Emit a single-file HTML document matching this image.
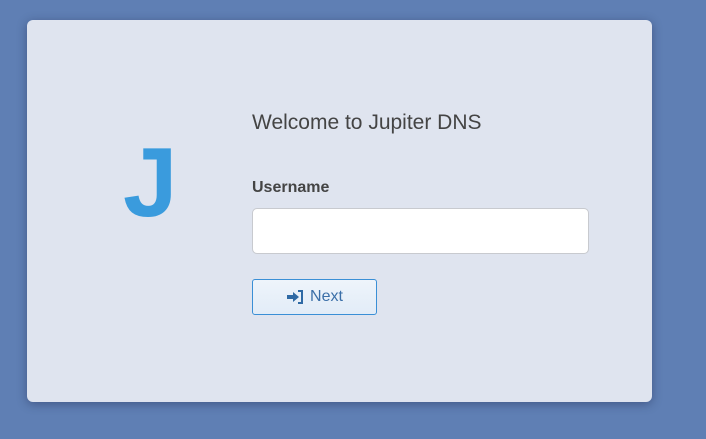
<!DOCTYPE html>
<html><head><style>
html,body{margin:0;padding:0;width:706px;height:439px;background:#5f7fb4;overflow:hidden;font-family:"Liberation Sans",sans-serif;}
.card{position:absolute;left:27px;top:20px;width:625px;height:382px;background:#dfe4ef;border-radius:6px;box-shadow:0 2px 10px rgba(30,40,80,0.45);}
.j{position:absolute;left:123px;top:133px;font-size:98px;font-weight:bold;color:#3a9bdd;line-height:1;}
.t{position:absolute;left:252px;top:111px;font-size:21px;color:#444;}
.l{position:absolute;left:252px;top:179px;font-size:16px;font-weight:bold;color:#444;}
.in{position:absolute;left:252px;top:208px;width:335px;height:44px;background:#fff;border:1px solid #c8cacf;border-radius:5px;}
.b{position:absolute;left:252px;top:279px;width:123px;height:34px;border:1px solid #3a8fd6;border-radius:3px;background:linear-gradient(#eef4fb,#e2ecf7);color:#3b6fa8;font-size:16px;display:flex;align-items:center;justify-content:center;gap:6px;}
</style></head><body>
<div class="card"></div>
<div class="j">J</div>
<div class="t">Welcome to Jupiter DNS</div>
<div class="l">Username</div>
<div class="in"></div>
<div class="b"><svg width="18" height="14" viewBox="0 0 18 14"><path d="M1 5h6V2l6 5-6 5V9H1z" fill="#2f6aa5"/><path d="M12 1h4v12h-4" fill="none" stroke="#2f6aa5" stroke-width="2"/></svg>Next</div>
</body></html>
